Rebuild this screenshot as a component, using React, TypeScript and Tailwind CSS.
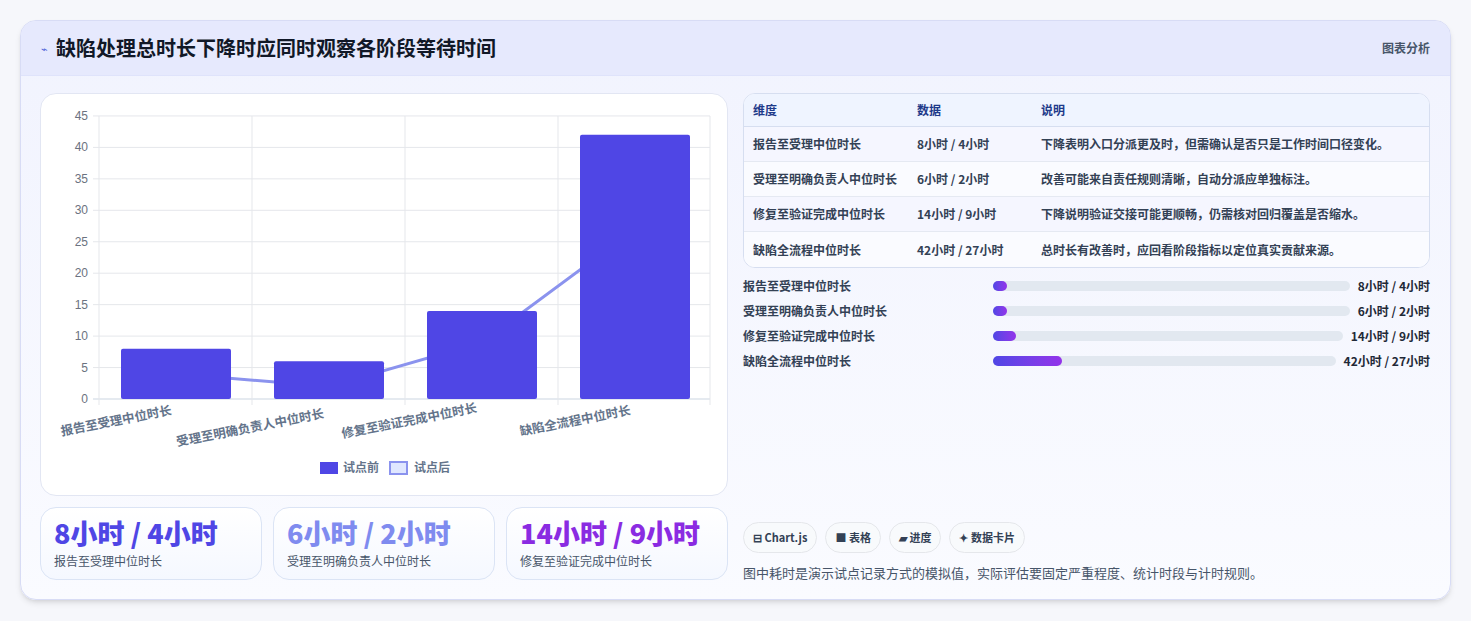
const F = { fontFamily: '"Noto Sans CJK SC", "Liberation Sans", sans-serif' };

const rows = [
  { k: '报告至受理中位时长', d: '8小时 / 4小时', s: '下降表明入口分派更及时，但需确认是否只是工作时间口径变化。', p: '4%' },
  { k: '受理至明确负责人中位时长', d: '6小时 / 2小时', s: '改善可能来自责任规则清晰，自动分派应单独标注。', p: '4%' },
  { k: '修复至验证完成中位时长', d: '14小时 / 9小时', s: '下降说明验证交接可能更顺畅，仍需核对回归覆盖是否缩水。', p: '6.5%' },
  { k: '缺陷全流程中位时长', d: '42小时 / 27小时', s: '总时长有改善时，应回看阶段指标以定位真实贡献来源。', p: '20%' },
];

const y = (v: number) => 398 - v * 6.29;

function Chart() {
  const ticks = [0, 5, 10, 15, 20, 25, 30, 35, 40, 45];
  const before = [8, 6, 14, 42];
  const after = [4, 2, 9, 27];
  const cx = [175, 328, 481, 634];
  const labels = ['报告至受理中位时长', '受理至明确负责人中位时长', '修复至验证完成中位时长', '缺陷全流程中位时长'];
  const lx = [116, 250, 409, 575];
  const ly = [424, 431, 424, 424];
  return (
    <svg width="688" height="402" viewBox="40 93 688 402" className="block">
      {ticks.map((t) => (
        <g key={t}>
          <line x1="92" x2="709" y1={y(t)} y2={y(t)} stroke={t === 0 ? '#cbd5e1' : '#e5e7eb'} />
          <text x="87" y={y(t) + 4} fontSize="12" fill="#6b7280" textAnchor="end" fontFamily="Liberation Sans">{t}</text>
        </g>
      ))}
      {[98, 251, 404, 557, 709].map((x) => (
        <line key={x} x1={x} x2={x} y1="115" y2="404" stroke="#e5e7eb" />
      ))}
      <polyline points={cx.map((x, i) => `${x},${y(after[i])}`).join(' ')} fill="none" stroke="#8b93ee" strokeWidth="3" />
      {before.map((v, i) => (
        <rect key={i} x={cx[i] - 55} y={y(v)} width="110" height={398 - y(v)} rx="2" fill="#4f46e5" />
      ))}
      {labels.map((l, i) => (
        <text key={l} x={lx[i]} y={ly[i]} fontSize="12.5" fontWeight="600" fill="#64748b" textAnchor="middle" transform={`rotate(-11 ${lx[i]} ${ly[i]})`} style={F}>{l}</text>
      ))}
      <rect x="319" y="461" width="18" height="12" fill="#4f46e5" />
      <text x="342" y="471" fontSize="12" fontWeight="600" fill="#64748b" style={F}>试点前</text>
      <rect x="389" y="461" width="17" height="12" fill="#e0e7ff" stroke="#8b93ee" strokeWidth="2" />
      <text x="413" y="471" fontSize="12" fontWeight="600" fill="#64748b" style={F}>试点后</text>
    </svg>
  );
}

export default function App() {
  return (
    <div className="h-[621px] w-[1471px] bg-[#f6f7fb] p-5" style={F}>
      <div className="flex h-[580px] flex-col overflow-hidden rounded-2xl border border-[#d8dcf5] bg-gradient-to-b from-[#f1f3fe] to-[#fafbff] shadow-md">
        <div className="flex h-[55px] shrink-0 items-center justify-between border-b border-[#dfe3fb] bg-[#e6e9fd] pl-5 pr-5">
          <div className="flex items-center gap-2">
            <span className="text-[11px] text-[#4f63d8]">⌁</span>
            <h1 className="text-[20px] font-bold text-[#111827]">缺陷处理总时长下降时应同时观察各阶段等待时间</h1>
          </div>
          <span className="text-xs font-semibold text-[#475569]">图表分析</span>
        </div>
        <div className="flex flex-1 gap-[15px] pl-[19px] pr-5 pt-[17px]">
          <div className="flex w-[688px] flex-col gap-[11px]">
            <div className="h-[403px] overflow-hidden rounded-2xl border border-[#e2e6f3] bg-white">
              <Chart />
            </div>
            <div className="flex gap-[11px]">
              {[
                ['8小时 / 4小时', '报告至受理中位时长', 'text-[#4f46e5]'],
                ['6小时 / 2小时', '受理至明确负责人中位时长', 'text-[#7f8bef]'],
                ['14小时 / 9小时', '修复至验证完成中位时长', 'text-[#8a2be2]'],
              ].map(([v, l, c]) => (
                <div key={l} className="flex h-[73px] flex-1 flex-col justify-center rounded-2xl border border-[#dbe4f5] bg-gradient-to-b from-white to-[#f5f8ff] px-[13px]">
                  <div className={`mb-[7px] text-[27px] font-extrabold leading-none ${c}`}>{v}</div>
                  <div className="text-xs leading-4 text-[#475569]">{l}</div>
                </div>
              ))}
            </div>
          </div>
          <div className="flex flex-1 flex-col">
            <div className="overflow-hidden rounded-xl border border-[#d6def0] bg-white text-xs">
              <div className="flex h-[33px] items-center border-b border-[#d6def0] bg-[#eff4ff] px-[9px] font-bold text-[#1e3a8a]">
                <div className="w-[164px]">维度</div>
                <div className="w-[124px]">数据</div>
                <div>说明</div>
              </div>
              {rows.map((r, i) => (
                <div key={r.k} className={`flex h-[35px] items-center px-[9px] font-semibold text-[#334155] ${i < 3 ? 'border-b border-[#e5e9f2]' : ''} ${i % 2 ? 'bg-[#fafbff]' : 'bg-[#f5f6ff]'}`}>
                  <div className="w-[164px]">{r.k}</div>
                  <div className="w-[124px]">{r.d}</div>
                  <div>{r.s}</div>
                </div>
              ))}
            </div>
            <div className="mt-[9px] flex flex-col gap-[7px]">
              {rows.map((r) => (
                <div key={r.k} className="flex h-[18px] items-center text-xs font-semibold text-[#334155]">
                  <div className="w-[250px] shrink-0">{r.k}</div>
                  <div className="mr-2 h-[10px] flex-1 rounded-full bg-[#e2e8f0]">
                    <div className="h-full rounded-full bg-gradient-to-r from-[#4f46e5] to-[#9333ea]" style={{ width: r.p, minWidth: 13 }} />
                  </div>
                  <div className="font-bold text-[#1f2937]">{r.d}</div>
                </div>
              ))}
            </div>
            <div className="mt-auto pb-[17px]">
              <div className="flex gap-2">
                {['⊟ Chart.js', '■ 表格', '▰ 进度', '✦ 数据卡片'].map((c) => (
                  <span key={c} className="rounded-full border border-[#e5e7eb] bg-[#f8fafc] px-[9px] py-[6px] text-[11px] font-bold text-[#334155]">{c}</span>
                ))}
              </div>
              <p className="mt-[10px] text-[13px] text-[#475569]">图中耗时是演示试点记录方式的模拟值，实际评估要固定严重程度、统计时段与计时规则。</p>
            </div>
          </div>
        </div>
      </div>
    </div>
  );
}
